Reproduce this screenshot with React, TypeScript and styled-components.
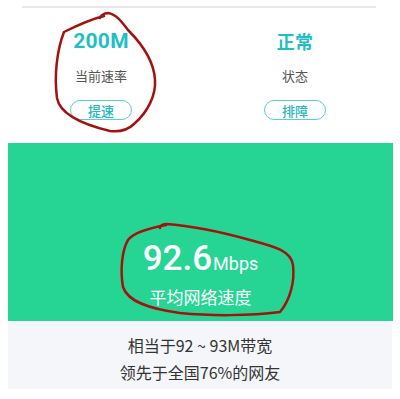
import React from "react";
import styled, { createGlobalStyle } from "styled-components";

const Global = createGlobalStyle`
  html, body { margin: 0; padding: 0; background: #ffffff; }
  body { font-family: "Noto Sans", "Noto Sans CJK SC", sans-serif; }
`;

const Page = styled.div`
  position: relative;
  width: 400px;
  height: 399px;
  overflow: hidden;
  background: #fff;
  display: flex;
  flex-direction: column;
`;

const TopRule = styled.div`
  height: 2px;
  margin: 6px 24px 0 22px;
  background: #e6e8eb;
`;

const Stats = styled.div`
  display: grid;
  grid-template-columns: 1fr 1fr;
  padding: 0 8px 0 4px;
  height: 135px;
`;

const Stat = styled.div`
  display: flex;
  flex-direction: column;
  align-items: center;
  padding-top: 18px;
`;

const StatValue = styled.div<{ $cjk?: boolean }>`
  font-family: ${(p) => (p.$cjk ? '"Noto Sans CJK SC", sans-serif' : 'Roboto, "Noto Sans", sans-serif')};
  font-weight: 700;
  font-size: ${(p) => (p.$cjk ? "18px" : "21px")};
  line-height: 30px;
  color: #1fbfc5;
  letter-spacing: 0.3px;
`;

const StatLabel = styled.div`
  margin-top: 10px;
  font-family: "Noto Sans CJK SC", sans-serif;
  font-size: 13px;
  line-height: 20px;
  color: #555;
`;

const Pill = styled.div`
  margin-top: 14px;
  width: 62px;
  height: 20px;
  box-sizing: border-box;
  border: 1.5px solid #5ccdd0;
  border-radius: 12px;
  display: flex;
  align-items: center;
  justify-content: center;
  font-family: "Noto Sans CJK SC", sans-serif;
  font-size: 13px;
  font-weight: 500;
  color: #24b7bd;
`;

const Green = styled.div`
  margin: 0 7px 0 8px;
  height: 178px;
  background: #26d594;
  display: flex;
  flex-direction: column;
  align-items: center;
  padding-top: 96px;
  box-sizing: border-box;
  color: #fff;
`;

const Speed = styled.div`
  display: flex;
  align-items: baseline;
  font-family: Roboto, "Noto Sans", sans-serif;
  line-height: 40px;
`;

const SpeedNum = styled.span`
  font-size: 35px;
  font-weight: 500;
`;

const SpeedUnit = styled.span`
  font-size: 18px;
  margin-left: 1px;
`;

const SpeedLabel = styled.div`
  margin-top: 1px;
  font-family: "Noto Sans CJK SC", sans-serif;
  font-size: 17px;
  line-height: 24px;
`;

const Footer = styled.div`
  margin: 1px 8px 0 8px;
  height: 67px;
  background: #f4f6f9;
  display: flex;
  flex-direction: column;
  align-items: center;
  padding-top: 10px;
  box-sizing: border-box;
`;

const FootLine = styled.div`
  font-family: "Noto Sans CJK SC", sans-serif;
  font-size: 16px;
  line-height: 27px;
  color: #333;
`;

const Scribble = styled.svg`
  position: absolute;
  left: 0;
  top: 0;
  pointer-events: none;
`;

export default function App() {
  return (
    <>
      <Global />
      <Page>
        <TopRule />
        <Stats>
          <Stat>
            <StatValue>200M</StatValue>
            <StatLabel>当前速率</StatLabel>
            <Pill>提速</Pill>
          </Stat>
          <Stat>
            <StatValue $cjk>正常</StatValue>
            <StatLabel>状态</StatLabel>
            <Pill>排障</Pill>
          </Stat>
        </Stats>
        <Green>
          <Speed>
            <SpeedNum>92.6</SpeedNum>
            <SpeedUnit>Mbps</SpeedUnit>
          </Speed>
          <SpeedLabel>平均网络速度</SpeedLabel>
        </Green>
        <Footer>
          <FootLine>相当于92 ~ 93M带宽</FootLine>
          <FootLine>领先于全国76%的网友</FootLine>
        </Footer>
        <Scribble width="400" height="399" viewBox="0 0 400 399">
          <path
            d="M104 16 C96 18 80 24 64 32 C57 50 54 75 57 98 C60 115 85 125 110 131 C120 132 128 130 134 124 C148 112 156 95 155 80 C154 60 140 42 128 30 C122 22 116 14 108 13 C104 13 100 16 100 18"
            fill="none"
            stroke="#a3120f"
            strokeWidth="2.5"
            strokeLinecap="round"
            strokeLinejoin="round"
          />
          <path
            d="M166 225 C150 228 134 232 128 240 C122 250 120 270 123 287 C128 302 150 309 180 313 C210 316 250 316 280 312 C290 300 295 282 293 265 C291 250 272 246 250 240 C225 233 195 226 166 224 C162 224 160 226 160 228"
            fill="none"
            stroke="#a3120f"
            strokeWidth="2.5"
            strokeLinecap="round"
            strokeLinejoin="round"
          />
        </Scribble>
      </Page>
    </>
  );
}
